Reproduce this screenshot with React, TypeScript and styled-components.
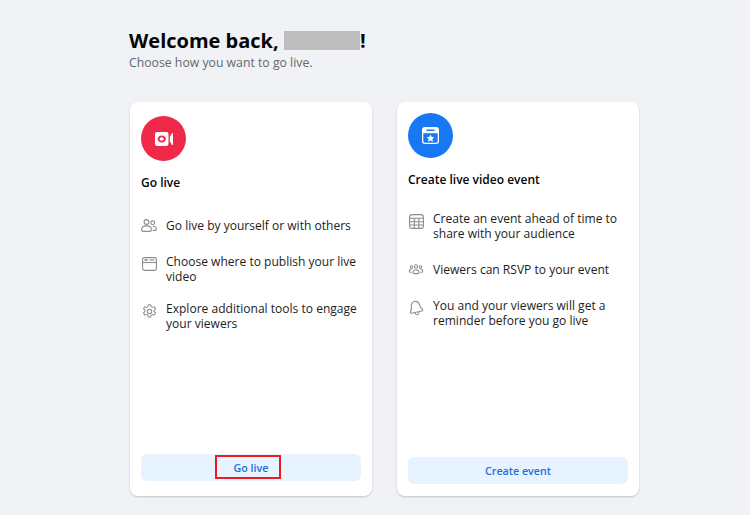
import React from 'react';
import styled, { createGlobalStyle } from 'styled-components';

const GlobalStyle = createGlobalStyle`
    html, body {
        margin: 0;
        padding: 0;
        background-color: #f0f2f5;
    }
    body {
        font-family: "Open Sans", "Noto Sans", "Liberation Sans", sans-serif;
    }
`

const CameraIcon = () => (
    <svg width="18" height="14" viewBox="0 0 20 15.500">
        <path fill="#fff" fillRule="evenodd" d="M2.500 0h10A2.500 2.500 0 0 1 15 2.500v10.500a2.500 2.500 0 0 1-2.500 2.500h-10A2.500 2.500 0 0 1 0 13V2.500A2.500 2.500 0 0 1 2.500 0zM7.500 3.900C5 3.900 2.900 5.600 2.900 7.750s2.100 3.850 4.600 3.850 4.600-1.700 4.600-3.850S10 3.900 7.500 3.900zM7.500 5.900c1.300 0 2.300.8 2.300 1.850S8.800 9.600 7.500 9.600 5.200 8.800 5.200 7.750 6.200 5.900 7.500 5.900z"/>
        <path fill="#fff" d="M16.500 5.200 18.600 1.500c.4-.7 1.400-.4 1.400.4v11.700c0 .8-1 1.100-1.400.4l-2.100-3.700z"/>
    </svg>
)

const CalendarStarIcon = () => (
    <svg width="17" height="17" viewBox="0 0 17 17">
        <path fill="#fff" fillRule="evenodd" d="M3 0h11a3 3 0 0 1 3 3v11a3 3 0 0 1-3 3H3a3 3 0 0 1-3-3V3a3 3 0 0 1 3-3zM1.300 6.300V14A1.700 1.700 0 0 0 3 15.700h11a1.700 1.700 0 0 0 1.700-1.700V6.300zM5 2.600a.7.700 0 0 0 0 1.400h7a.7.700 0 0 0 0-1.400z"/>
        <path fill="#fff" d="m8.500 7.400 1.200 2.500 2.800.3-2.100 1.900.6 2.700-2.500-1.400-2.500 1.400.6-2.700-2.100-1.900 2.800-.3z"/>
    </svg>
)

const stroke = { fill: 'none', stroke: '#8a8d91', strokeWidth: 1.1 }

const PeopleIcon = () => (
    <svg width="16" height="13" viewBox="0 0 16 13">
        <circle cx="5.500" cy="3" r="2.400" {...stroke}/>
        <path d="M.6 10.700c0-2.500 2-3.800 4.900-3.800s4.900 1.300 4.900 3.800c0 1-.6 1.700-1.500 1.700H2.100C1.200 12.400.6 11.700.6 10.700z" {...stroke}/>
        <circle cx="11.700" cy="3.800" r="1.900" {...stroke}/>
        <path d="M11.700 7.200c2.200 0 3.700 1 3.700 2.900 0 .8-.5 1.300-1.200 1.300h-2.500" {...stroke}/>
    </svg>
)

const PublishIcon = () => (
    <svg width="15" height="14" viewBox="0 0 15 14">
        <rect x=".6" y=".6" width="13.800" height="12.800" rx="1.800" {...stroke}/>
        <path d="M.6 5.500h13.800" {...stroke}/>
        <path d="M2.400 2.200h3.300v1.600H2.400z" fill="#8a8d91"/>
        <path d="M7.500 3h5" {...stroke}/>
    </svg>
)

const GearIcon = () => (
    <svg width="15" height="15" viewBox="0 0 16 16">
        <path d="M6.700.8h2.600l.4 2 1.500.8 1.900-.7 1.300 2.300-1.500 1.300v1.700l1.500 1.300-1.300 2.300-1.900-.7-1.500.8-.4 2H6.700l-.4-2-1.500-.8-1.900.7-1.300-2.300 1.500-1.300V6.500L1.600 5.200l1.300-2.300 1.900.7 1.500-.8z" strokeLinejoin="round" {...stroke}/>
        <circle cx="8" cy="7.900" r="2.400" {...stroke}/>
    </svg>
)

const TableIcon = () => (
    <svg width="15" height="15" viewBox="0 0 15 15">
        <rect x=".6" y=".6" width="13.800" height="13.800" rx="2.500" {...stroke}/>
        <path d="M.6 4.300h13.800M.6 7.800h13.800M.6 11h13.800M5.300 4.300v10.100M9.800 4.300v10.100" {...stroke}/>
    </svg>
)

const GroupIcon = () => (
    <svg width="16" height="11" viewBox="0 0 16 12">
        <circle cx="8" cy="2.600" r="1.700" {...stroke}/>
        <circle cx="3.100" cy="3.400" r="1.400" {...stroke}/>
        <circle cx="12.900" cy="3.400" r="1.400" {...stroke}/>
        <path d="M4.800 9.500c0-2 1.300-3.300 3.200-3.300s3.200 1.300 3.200 3.300c0 .7-.4 1-1 1H5.800c-.6 0-1-.3-1-1z" {...stroke}/>
        <path d="M3.400 9H1.600C1 9 .6 8.600.6 8c0-1.300 1-2.300 2.500-2.300M12.600 9h1.800c.6 0 1-.4 1-1 0-1.300-1-2.300-2.500-2.300" {...stroke}/>
    </svg>
)

const BellIcon = () => (
    <svg width="16" height="17" viewBox="0 0 16 17">
        <g transform="rotate(-12 8 8.500)">
            <path d="M8 1.400C5.400 1.400 4 3.400 3.800 5.800 3.700 8 3 9.400 2 10.500 1.400 11.200 1.800 12.200 2.700 12.200h10.600c.9 0 1.300-1 .7-1.700-1-1.100-1.700-2.500-1.800-4.700C12 3.400 10.600 1.400 8 1.400z" strokeLinejoin="round" {...stroke}/>
            <path d="M6 12.600c.2 1.500 1 2.300 2 2.300s1.800-.8 2-2.300" {...stroke}/>
        </g>
    </svg>
)

type FeatureType = {
    icon: React.ReactNode
    text: string
}

type OptionCardPropsType = {
    color: string
    badge: React.ReactNode
    title: string
    features: FeatureType[]
    action: string
    top: number
    bottom: number
    listGap: number
    rowGap: number
    marked?: boolean
}

const OptionCard = (props: OptionCardPropsType) => {
    return (
        <Card $top={props.top} $bottom={props.bottom}>
            <Badge $color={props.color}>{props.badge}</Badge>
            <CardTitle>{props.title}</CardTitle>
            <FeatureList $gap={props.listGap} $rowGap={props.rowGap}>
                {props.features.map((feature) => (
                    <Feature key={feature.text}>
                        <FeatureIcon>{feature.icon}</FeatureIcon>
                        <FeatureText>{feature.text}</FeatureText>
                    </Feature>
                ))}
            </FeatureList>
            <ActionButton>
                {props.action}
                {props.marked && <Marker/>}
            </ActionButton>
        </Card>
    );
};

export default function App() {
    return (
        <Page>
            <GlobalStyle/>
            <Heading>Welcome back, <HiddenName/>!</Heading>
            <Subtitle>Choose how you want to go live.</Subtitle>
            <Cards>
                <OptionCard
                    top={14}
                    bottom={15}
                    listGap={23}
                    rowGap={17.5}
                    color={'#f02849'}
                    badge={<CameraIcon/>}
                    title={'Go live'}
                    action={'Go live'}
                    marked
                    features={[
                        {icon: <PeopleIcon/>, text: 'Go live by yourself or with others'},
                        {icon: <PublishIcon/>, text: 'Choose where to publish your live video'},
                        {icon: <GearIcon/>, text: 'Explore additional tools to engage your viewers'},
                    ]}
                />
                <OptionCard
                    top={11}
                    bottom={12}
                    listGap={22}
                    rowGap={18}
                    color={'#1877f2'}
                    badge={<CalendarStarIcon/>}
                    title={'Create live video event'}
                    action={'Create event'}
                    features={[
                        {icon: <TableIcon/>, text: 'Create an event ahead of time to share with your audience'},
                        {icon: <GroupIcon/>, text: 'Viewers can RSVP to your event'},
                        {icon: <BellIcon/>, text: 'You and your viewers will get a reminder before you go live'},
                    ]}
                />
            </Cards>
        </Page>
    );
}

const Page = styled.div`
    width: 750px;
    height: 515px;
    box-sizing: border-box;
    padding: 27px 0 0 129px;
    overflow: hidden;
    background-color: #f0f2f5;
`
const Heading = styled.h1`
    margin: 0;
    height: 27px;
    display: flex;
    align-items: center;
    white-space: pre;
    font-size: 20px;
    line-height: 27px;
    font-weight: 700;
    color: #050505;
`
const HiddenName = styled.span`
    display: inline-block;
    width: 76px;
    height: 19px;
    background-color: #bdbdbd;
`
const Subtitle = styled.p`
    margin: 0;
    font-size: 12.250px;
    line-height: 17px;
    color: #65676b;
`
const Cards = styled.div`
    display: flex;
    gap: 25px;
    margin: 31px 0 0 1px;
`
const Card = styled.section<{ $top: number, $bottom: number }>`
    position: relative;
    width: 242px;
    height: 394px;
    box-sizing: border-box;
    padding: ${props => props.$top}px 11px ${props => props.$bottom}px 11px;
    display: flex;
    flex-direction: column;
    background-color: #fff;
    border-radius: 8px;
    box-shadow: 0 1px 2px rgba(0, 0, 0, 0.2);
`
const Badge = styled.div<{ $color: string }>`
    width: 45px;
    height: 45px;
    flex: none;
    display: flex;
    align-items: center;
    justify-content: center;
    border-radius: 50%;
    background-color: ${props => props.$color};
`
const CardTitle = styled.h2`
    margin: 13px 0 0;
    font-size: 12px;
    line-height: 18px;
    font-weight: 600;
    color: #050505;
`
const FeatureList = styled.ul<{ $gap: number, $rowGap: number }>`
    list-style: none;
    margin: ${props => props.$gap}px 0 0;
    padding: 0;
    display: flex;
    flex-direction: column;
    gap: ${props => props.$rowGap}px;
`
const Feature = styled.li`
    display: flex;
    gap: 9px;
`
const FeatureIcon = styled.span`
    width: 16px;
    height: 21px;
    flex: none;
    display: flex;
    align-items: center;
    justify-content: center;
`
const FeatureText = styled.span`
    min-height: 21px;
    display: flex;
    align-items: center;
    font-size: 12.050px;
    line-height: 15px;
    color: #1c1e21;
`
const ActionButton = styled.button`
    position: relative;
    margin-top: auto;
    width: 220px;
    height: 27px;
    padding: 0;
    border: none;
    border-radius: 6px;
    background-color: #e7f3ff;
    font-family: inherit;
    font-size: 10.700px;
    font-weight: 600;
    color: #216fdb;
`
const Marker = styled.span`
    position: absolute;
    left: 74px;
    top: 1px;
    width: 66px;
    height: 24px;
    box-sizing: border-box;
    border: 2px solid #ed1c24;
`
